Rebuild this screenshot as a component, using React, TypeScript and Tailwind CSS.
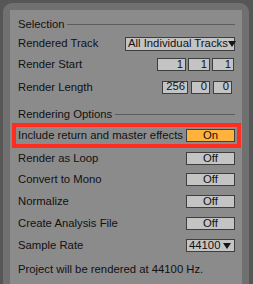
import React from 'react';

function Arrow() {
  return (
    <svg width="8" height="6" viewBox="0 0 8 6" className="shrink-0">
      <path d="M0 0 H8 L4 6 Z" fill="#141414" />
    </svg>
  );
}

function Toggle({ on }: { on?: boolean }) {
  return (
    <div
      className={
        'w-[49px] h-[13px] border border-[#3e3e3e] flex items-center justify-center leading-none ' +
        (on ? 'bg-[#ffb23c]' : 'bg-[#c4c4c4]')
      }
    >
      {on ? 'On' : 'Off'}
    </div>
  );
}

function NumBox({ w, value }: { w: string; value: string }) {
  return (
    <div className={`${w} h-[13px] border border-[#3e3e3e] bg-[#c4c4c4] flex items-center justify-end pr-[2px] leading-none`}>
      {value}
    </div>
  );
}

function Row({ label, h, children }: { label: string; h: string; children?: React.ReactNode }) {
  return (
    <div className={`${h} flex items-center justify-between whitespace-nowrap`}>
      <span>{label}</span>
      {children}
    </div>
  );
}

export default function App() {
  return (
    <div className="w-[253px] h-[284px] bg-[#565656] pt-[3px] pl-[3px] pr-[4px] overflow-hidden text-[11.3px] leading-normal text-[#111111] font-['Liberation_Sans',Arial,sans-serif]">
      <div className="h-[290px] bg-[#707070] rounded-t-[9px] pt-[7px] px-[7px]">
        <div className="h-full bg-[#8b8b8b] pl-[8px] pr-[7px] pt-[4px]">
          {/* Selection */}
          <div className="flex items-center h-[20px]">
            <span className="pr-[3px]">Selection</span>
            <div className="flex-1 h-px bg-[#5c5c5c]" />
          </div>
          <Row label="Rendered Track" h="h-[19px]">
            <div className="w-[110px] h-[14px] border border-[#3e3e3e] bg-[#c4c4c4] flex items-center justify-between pl-[2px] pr-[1px] leading-none">
              <span>All Individual Tracks</span>
              <Arrow />
            </div>
          </Row>
          <Row label="Render Start" h="h-[23px]">
            <div className="flex gap-[2px] pr-[1px]">
              <NumBox w="w-[29px]" value="1" />
              <NumBox w="w-[22px]" value="1" />
              <NumBox w="w-[22px]" value="1" />
            </div>
          </Row>
          <Row label="Render Length" h="h-[22px]">
            <div className="flex gap-[3px] pr-[3px]">
              <NumBox w="w-[26px]" value="256" />
              <NumBox w="w-[19px]" value="0" />
              <NumBox w="w-[19px]" value="0" />
            </div>
          </Row>

          {/* Rendering Options */}
          <div className="flex items-center h-[25px] pt-[8px]">
            <span className="pr-[3px]">Rendering Options</span>
            <div className="flex-1 h-px bg-[#5c5c5c]" />
          </div>
          <div className="-ml-[6px] -mr-[6px] border-4 border-[#ff2d20] px-[2px] h-[25px] flex items-center justify-between whitespace-nowrap">
            <span>Include return and master effects</span>
            <Toggle on />
          </div>
          <Row label="Render as Loop" h="h-[21px]">
            <Toggle />
          </Row>
          <Row label="Convert to Mono" h="h-[21px]">
            <Toggle />
          </Row>
          <Row label="Normalize" h="h-[23px]">
            <Toggle />
          </Row>
          <Row label="Create Analysis File" h="h-[21px]">
            <Toggle />
          </Row>
          <Row label="Sample Rate" h="h-[23px]">
            <div className="w-[49px] h-[13px] border border-[#3e3e3e] bg-[#c4c4c4] flex items-center justify-between pl-[2px] pr-[3px] leading-none">
              <span>44100</span>
              <Arrow />
            </div>
          </Row>
          <div className="h-[24px] flex items-center">Project will be rendered at 44100 Hz.</div>
        </div>
      </div>
    </div>
  );
}
